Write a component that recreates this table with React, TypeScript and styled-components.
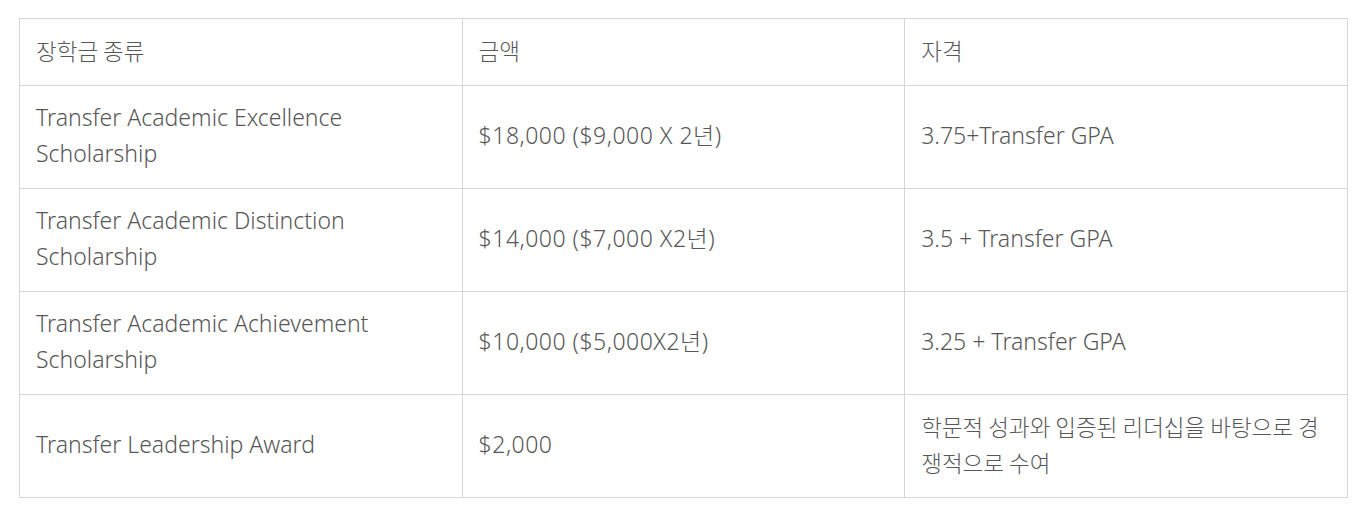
import React from "react";
import styled, { createGlobalStyle } from "styled-components";

type Scholarship = {
    name: string,
    amount: string,
    requirement: string,
    koreanRequirement?: boolean,
};

const rows: Scholarship[] = [
    {
        name: "Transfer Academic Excellence Scholarship",
        amount: "$18,000 ($9,000 X 2년)",
        requirement: "3.75+Transfer GPA",
    },
    {
        name: "Transfer Academic Distinction Scholarship",
        amount: "$14,000 ($7,000 X2년)",
        requirement: "3.5 + Transfer GPA",
    },
    {
        name: "Transfer Academic Achievement Scholarship",
        amount: "$10,000 ($5,000X2년)",
        requirement: "3.25 + Transfer GPA",
    },
    {
        name: "Transfer Leadership Award",
        amount: "$2,000",
        requirement: "학문적 성과와 입증된 리더십을 바탕으로 경쟁적으로 수여",
        koreanRequirement: true,
    },
];

const GlobalStyle = createGlobalStyle`
    html, body {
        margin: 0;
        padding: 0;
        background: #ffffff;
    }
`;

const App: React.FC = () => {
    return (
        <>
            <GlobalStyle />
            <Page>
                <Table>
                    <colgroup>
                        <col style={{ width: "33.33%" }} />
                        <col style={{ width: "33.33%" }} />
                        <col style={{ width: "33.34%" }} />
                    </colgroup>
                    <thead>
                        <tr>
                            <Cell as="th"><Korean>장학금 종류</Korean></Cell>
                            <Cell as="th"><Korean>금액</Korean></Cell>
                            <Cell as="th"><Korean>자격</Korean></Cell>
                        </tr>
                    </thead>
                    <tbody>
                        {rows.map((r) => {
                            return (
                                <tr key={r.name}>
                                    <Cell>{r.name}</Cell>
                                    <Cell $tracking={0.5}>{r.amount}</Cell>
                                    <Cell>
                                        {r.koreanRequirement
                                            ? <Korean>{r.requirement}</Korean>
                                            : r.requirement}
                                    </Cell>
                                </tr>
                            );
                        })}
                    </tbody>
                </Table>
            </Page>
        </>
    );
};

const Page = styled.div`
    padding: 18px 22px 0 19px;
`;

const Table = styled.table`
    width: 1329px;
    border-collapse: collapse;
    table-layout: fixed;
    font-family: "Noto Sans", "Noto Sans CJK KR", sans-serif;
    font-weight: 300;
    font-size: 23px;
    line-height: 36px;
    color: #575757;
`;

const Cell = styled.td<{ $tracking?: number }>`
    border: 1px solid #d6d6d6;
    padding: 13px 16px 17px;
    text-align: left;
    vertical-align: middle;
    font-weight: 300;
    letter-spacing: ${props => props.$tracking ?? 0}px;
`;

const Korean = styled.div`
    font-family: "Noto Sans CJK KR", sans-serif;
    font-size: 22.5px;
    line-height: 36px;
`;

export default App;
